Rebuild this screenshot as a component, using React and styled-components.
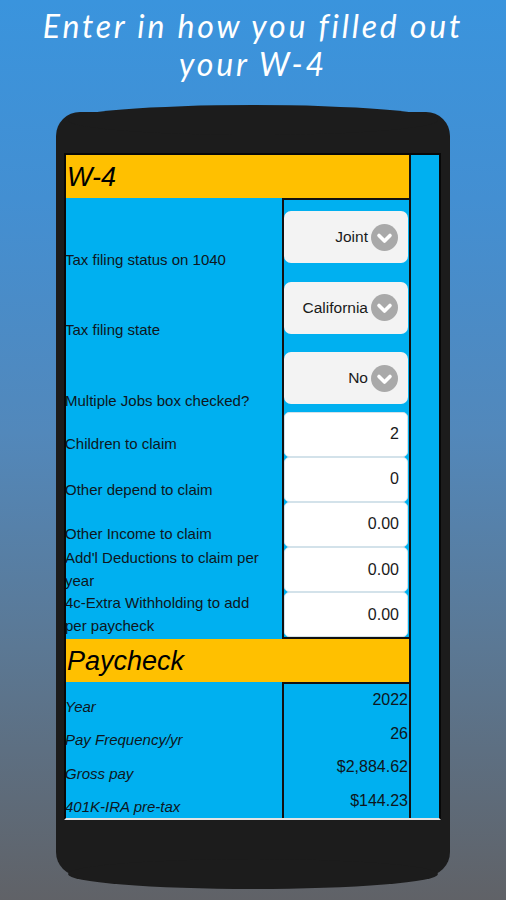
import React from 'react';
import styled, { createGlobalStyle } from 'styled-components';

const GlobalStyle = createGlobalStyle`
  html, body {
    margin: 0;
    padding: 0;
  }
  body {
    font-family: "Liberation Sans", Arial, sans-serif;
  }
`;

const selects = [
  { label: 'Tax filing status on 1040', value: 'Joint' },
  { label: 'Tax filing state', value: 'California' },
  { label: 'Multiple Jobs box checked?', value: 'No' },
];

const inputs = [
  { label: 'Children to claim', value: '2', lift: 2 },
  { label: 'Other depend to claim', value: '0', lift: 1 },
  { label: 'Other Income to claim', value: '0.00', lift: 2 },
  { label: "Add'l Deductions to claim per year", value: '0.00', lift: -2 },
  { label: '4c-Extra Withholding to add per paycheck', value: '0.00', lift: -2 },
];

const paycheck = [
  { label: 'Year', value: '2022' },
  { label: 'Pay Frequency/yr', value: '26' },
  { label: 'Gross pay', value: '$2,884.62' },
  { label: '401K-IRA pre-tax', value: '$144.23' },
];

const Chevron = () => (
  <ChevronDot>
    <svg width='27' height='27' viewBox='0 0 27 27'>
      <polyline
        points='8,11.5 13.5,17 19,11.5'
        fill='none'
        stroke='#fff'
        strokeWidth='3.6'
        strokeLinecap='round'
        strokeLinejoin='round'
      />
    </svg>
  </ChevronDot>
);

const App = () => {
  return (
    <Page>
      <GlobalStyle />
      <Title>
        Enter in how you filled out
        <br />
        your W-4
      </Title>

      <Phone>
        <Screen>
          <Sheet>
            <SectionHeader>W-4</SectionHeader>

            <SectionBody>
              <LabelCol>
                {selects.map((s) => (
                  <Label key={s.label} h={70.5}>
                    {s.label}
                  </Label>
                ))}
                {inputs.map((s) => (
                  <Label key={s.label} h={45.2} lift={s.lift}>
                    {s.label}
                  </Label>
                ))}
              </LabelCol>

              <ValueCol>
                {selects.map((s) => (
                  <SelectCell key={s.label}>
                    <SelectBox>
                      <span>{s.value}</span>
                      <Chevron />
                    </SelectBox>
                  </SelectCell>
                ))}
                {inputs.map((s) => (
                  <InputCell key={s.label}>
                    <InputBox>{s.value}</InputBox>
                  </InputCell>
                ))}
              </ValueCol>
            </SectionBody>

            <SectionHeader>Paycheck</SectionHeader>

            <SectionBody>
              <LabelCol>
                {paycheck.map((p) => (
                  <Label key={p.label} h={33.5} italic>
                    {p.label}
                  </Label>
                ))}
              </LabelCol>

              <ValueCol open>
                {paycheck.map((p) => (
                  <PayValue key={p.label}>{p.value}</PayValue>
                ))}
              </ValueCol>
            </SectionBody>
          </Sheet>

          <Strip />
        </Screen>
      </Phone>
    </Page>
  );
};

const Page = styled.div`
  display: flex;
  flex-direction: column;
  align-items: center;

  width: 506px;
  height: 900px;
  overflow: hidden;
  background: linear-gradient(
    180deg,
    #3a94dd 0%,
    #438fd2 22%,
    #5288bb 48%,
    #5b7894 72%,
    #606267 100%
  );
`;

const Title = styled.h1`
  margin: 7px 0 0;
  color: #fff;
  text-align: center;
  white-space: nowrap;

  font-family: Lato, "Open Sans", sans-serif;
  font-style: italic;
  font-weight: 400;
  font-size: 32px;
  line-height: 38px;
  letter-spacing: 2.8px;
`;

const Phone = styled.div`
  position: relative;
  box-sizing: border-box;

  width: 394px;
  height: 764px;
  margin-top: 29px;
  padding: 41px 9px 0 8px;

  background: #1c1c1c;
  border-radius: 24px;

  &::before,
  &::after {
    content: '';
    position: absolute;
    left: 12px;
    right: 12px;
    height: 30px;
    border-radius: 50%;
    background: #1c1c1c;
  }
  &::before {
    top: -7px;
  }
  &::after {
    bottom: -13px;
  }
`;

const Screen = styled.div`
  position: relative;
  z-index: 1;
  display: flex;
  box-sizing: border-box;

  height: 667px;
  overflow: hidden;

  background: #00b0f0;
  border: 2px solid #080808;
  border-bottom-color: #e4e4e4;
`;

const Sheet = styled.div`
  display: flex;
  flex-direction: column;
  box-sizing: border-box;

  width: 345px;
  flex-shrink: 0;
  border-right: 2px solid #111;
`;

const Strip = styled.div`
  flex: 1;
  background: #00b0f0;
`;

const SectionHeader = styled.div`
  flex-shrink: 0;
  height: 43px;
  padding-left: 1px;

  background: #ffc000;
  color: #000;

  font-style: italic;
  font-size: 27px;
  line-height: 44px;
`;

const SectionBody = styled.div`
  display: flex;
  flex-shrink: 0;
`;

const LabelCol = styled.div`
  display: flex;
  flex-direction: column;
  width: 216px;
  padding: 2px 0;
`;

const Label = styled.div`
  display: flex;
  align-items: flex-end;
  box-sizing: border-box;

  height: ${(p) => p.h}px;
  padding-bottom: ${(p) => p.lift || 0}px;
  padding-right: 10px;
  margin-left: -1px;

  color: #0e1620;
  font-size: 15px;
  font-style: ${(p) => (p.italic ? 'italic' : 'normal')};
  line-height: ${(p) => (p.italic ? 22 : 23)}px;
`;

const ValueCol = styled.div`
  display: flex;
  flex-direction: column;
  flex: 1;

  border: 2px solid #111;
  border-right: none;
  ${(p) => p.open && 'border-bottom: none;'}
`;

const SelectCell = styled.div`
  box-sizing: border-box;
  height: 70.5px;
  padding: 11px 1px 0 0;
`;

const SelectBox = styled.div`
  display: flex;
  align-items: center;
  justify-content: flex-end;
  gap: 3px;
  box-sizing: border-box;

  height: 52px;
  padding-right: 10px;

  background: #f3f3f3;
  border-radius: 7px;
  color: #1a1a1a;
  font-size: 15.5px;
`;

const ChevronDot = styled.span`
  display: flex;
  width: 27px;
  height: 27px;
  border-radius: 50%;
  background: #a9a9a9;
`;

const InputCell = styled.div`
  box-sizing: border-box;
  height: 45.2px;
  padding-right: 1px;
`;

const InputBox = styled.div`
  display: flex;
  align-items: center;
  justify-content: flex-end;
  box-sizing: border-box;

  height: 100%;
  padding-right: 8px;

  background: #fff;
  border: 1px solid #d3e2ea;
  border-radius: 5px;
  color: #1a1a1a;
  font-size: 16px;
`;

const PayValue = styled.div`
  box-sizing: border-box;
  height: 33.5px;
  padding: 4px 1px 0 0;

  color: #0e1620;
  text-align: right;
  font-size: 16px;
  line-height: 24px;
`;

export default App;
